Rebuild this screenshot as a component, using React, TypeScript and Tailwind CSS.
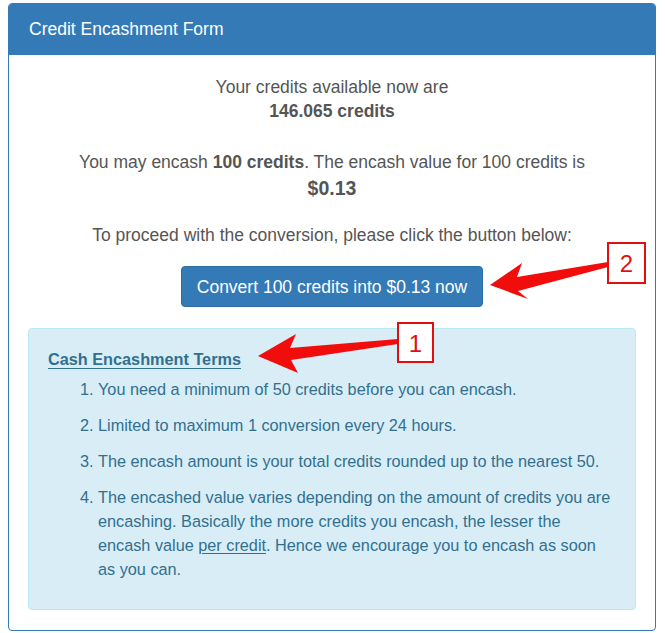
import React from 'react';

const terms: React.ReactNode[] = [
  'You need a minimum of 50 credits before you can encash.',
  'Limited to maximum 1 conversion every 24 hours.',
  'The encash amount is your total credits rounded up to the nearest 50.',
  <>
    The encashed value varies depending on the amount of credits you are
    <br />
    encashing. Basically the more credits you encash, the lesser the
    <br />
    encash value <span className="underline underline-offset-2">per credit</span>. Hence we encourage you to encash as soon
    <br />
    as you can.
  </>,
];

function Annotations() {
  return (
    <svg className="absolute left-0 top-0 pointer-events-none" width="665" height="633" viewBox="0 0 665 633">
      {/* arrow 1 */}
      <path d="M258 356 L296 334 L290 348 L398 339 L398 344 L291 360 L298 373 Z" fill="#f20d0d" />
      {/* arrow 2 */}
      <path d="M490 285 L522 263 L517 277 L608 262 L608 267 L518 291 L528 299 Z" fill="#f20d0d" />
      <rect x="398" y="323" width="35" height="39" fill="#fff" stroke="#e01010" strokeWidth="2" />
      <rect x="608" y="243" width="37" height="40" fill="#fff" stroke="#e01010" strokeWidth="2" />
      <text x="415.5" y="352" textAnchor="middle" fontSize="24" fill="#e01010" fontFamily="Liberation Sans, Arial, sans-serif">1</text>
      <text x="626.5" y="272" textAnchor="middle" fontSize="24" fill="#e01010" fontFamily="Liberation Sans, Arial, sans-serif">2</text>
    </svg>
  );
}

export default function App() {
  return (
    <div className="relative w-[665px] h-[633px] bg-white pl-[8px] pt-[3px] font-['Liberation_Sans',Arial,sans-serif]">
      <div className="w-[648px] h-[628px] border border-[#337ab7] rounded-[4px] overflow-hidden flex flex-col">
        <div className="bg-[#337ab7] h-[51px] px-[20px] flex items-center text-white text-[17.5px]">
          Credit Encashment Form
        </div>
        <div className="flex-1 px-[19px] pt-[20px] text-[#555] text-[17.5px] leading-[24px] text-center">
          <p>Your credits available now are</p>
          <p className="font-bold">146.065 credits</p>
          <p className="mt-[27px]">
            You may encash <b>100 credits</b>. The encash value for 100 credits is
          </p>
          <p className="font-bold text-[19.5px] leading-[28px]">$0.13</p>
          <p className="mt-[21px]">To proceed with the conversion, please click the button below:</p>
          <div className="mt-[19px] flex justify-center">
            <button className="h-[41px] w-[302px] bg-[#337ab7] border border-[#2e6da4] rounded-[4px] text-white text-[17.5px]">
              Convert 100 credits into $0.13 now
            </button>
          </div>
          <div className="mt-[21px] h-[282px] bg-[#d9edf7] border border-[#bce8f1] rounded-[4px] text-left text-[#31708f] text-[16.25px] pl-[19px] pr-0 pt-[18px]">
            <div className="font-bold underline underline-offset-[3px]">Cash Encashment Terms</div>
            <ol className="mt-[6px] pl-[50px] list-decimal whitespace-nowrap">
              {terms.map((t, i) => (
                <li key={i} className="mb-[12px]">
                  {t}
                </li>
              ))}
            </ol>
          </div>
        </div>
      </div>
      <Annotations />
    </div>
  );
}
